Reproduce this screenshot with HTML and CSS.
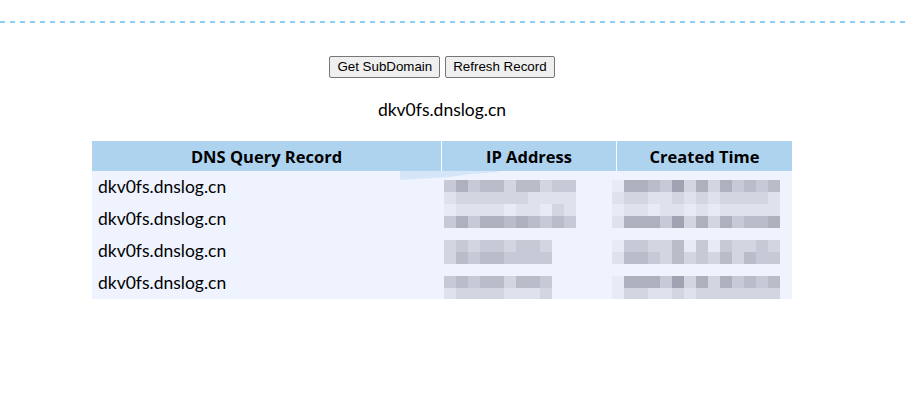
FILE: index.html
```html
<!DOCTYPE html>
<html>
<head>
<meta charset="utf-8">
<title>DNSLog</title>
<link rel="stylesheet" href="styles.css">
</head>
<body>
<div class="topline"></div>
<main class="page">
  <div class="actions">
    <button class="btn">Get SubDomain</button>
    <button class="btn">Refresh Record</button>
  </div>
  <p class="domain">dkv0fs.dnslog.cn</p>
  <div class="table-wrap">
    <table class="records">
      <thead>
        <tr>
          <th class="c-query">DNS Query Record</th>
          <th class="c-ip">IP Address</th>
          <th class="c-time">Created Time</th>
        </tr>
      </thead>
      <tbody>
        <tr>
          <td>dkv0fs.dnslog.cn</td>
          <td><div class="box"><div class="mz ip r1">
            <div class="mr"><i class="d"></i><i class="f"></i><i class="d"></i><i class="e"></i><i class="e"></i><i class="c"></i><i class="e"></i><i class="e"></i><i class="c"></i><i class="d"></i><i class="d"></i></div>
            <div class="mr"><i class="b"></i><i class="c"></i><i class="c"></i><i class="c"></i><i class="c"></i><i class="c"></i><i class="c"></i><i class="b"></i><i class="b"></i><i class="b"></i><i class="b"></i></div>
          </div></div></td>
          <td><div class="box"><div class="mz tm r1">
            <div class="mr"><i class="a"></i><i class="f"></i><i class="f"></i><i class="e"></i><i class="d"></i><i class="g"></i><i class="c"></i><i class="f"></i><i class="c"></i><i class="f"></i><i class="d"></i><i class="e"></i><i class="d"></i><i class="e"></i></div>
            <div class="mr"><i class="b"></i><i class="c"></i><i class="c"></i><i class="b"></i><i class="b"></i><i class="c"></i><i class="b"></i><i class="c"></i><i class="b"></i><i class="c"></i><i class="c"></i><i class="c"></i><i class="c"></i><i class="b"></i></div>
          </div></div></td>
        </tr>
        <tr>
          <td>dkv0fs.dnslog.cn</td>
          <td><div class="box"><div class="mz ip r2">
            <div class="mr"><i class="a"></i><i class="b"></i><i class="b"></i><i class="b"></i><i class="b"></i><i class="a"></i><i class="b"></i><i class="b"></i><i class="a"></i><i class="c"></i><i class="b"></i></div>
            <div class="mr"><i class="d"></i><i class="f"></i><i class="d"></i><i class="f"></i><i class="f"></i><i class="e"></i><i class="f"></i><i class="e"></i><i class="d"></i><i class="e"></i><i class="d"></i></div>
          </div></div></td>
          <td><div class="box"><div class="mz tm r2">
            <div class="mr"><i class="a"></i><i class="b"></i><i class="b"></i><i class="a"></i><i class="b"></i><i class="b"></i><i class="a"></i><i class="b"></i><i class="a"></i><i class="b"></i><i class="b"></i><i class="b"></i><i class="b"></i><i class="b"></i></div>
            <div class="mr"><i class="b"></i><i class="f"></i><i class="f"></i><i class="f"></i><i class="d"></i><i class="g"></i><i class="c"></i><i class="f"></i><i class="c"></i><i class="f"></i><i class="d"></i><i class="e"></i><i class="e"></i><i class="f"></i></div>
          </div></div></td>
        </tr>
        <tr>
          <td>dkv0fs.dnslog.cn</td>
          <td><div class="box"><div class="mz ip r3">
            <div class="mr"><i class="c"></i><i class="d"></i><i class="c"></i><i class="d"></i><i class="d"></i><i class="c"></i><i class="d"></i><i class="d"></i><i class="c"></i></div>
            <div class="mr"><i class="c"></i><i class="e"></i><i class="d"></i><i class="e"></i><i class="e"></i><i class="d"></i><i class="d"></i><i class="d"></i><i class="d"></i></div>
          </div></div></td>
          <td><div class="box"><div class="mz tm r3">
            <div class="mr"><i class="a"></i><i class="d"></i><i class="d"></i><i class="c"></i><i class="c"></i><i class="e"></i><i class="a"></i><i class="d"></i><i class="a"></i><i class="d"></i><i class="c"></i><i class="c"></i><i class="d"></i><i class="c"></i></div>
            <div class="mr"><i class="b"></i><i class="e"></i><i class="e"></i><i class="d"></i><i class="c"></i><i class="e"></i><i class="c"></i><i class="d"></i><i class="c"></i><i class="e"></i><i class="c"></i><i class="e"></i><i class="d"></i><i class="d"></i></div>
          </div></div></td>
        </tr>
        <tr>
          <td>dkv0fs.dnslog.cn</td>
          <td><div class="box"><div class="mz ip r4">
            <div class="mr"><i class="d"></i><i class="e"></i><i class="d"></i><i class="e"></i><i class="e"></i><i class="c"></i><i class="e"></i><i class="e"></i><i class="d"></i></div>
            <div class="mr"><i class="b"></i><i class="c"></i><i class="c"></i><i class="c"></i><i class="c"></i><i class="b"></i><i class="b"></i><i class="b"></i><i class="c"></i></div>
          </div></div></td>
          <td><div class="box"><div class="mz tm r4">
            <div class="mr"><i class="a"></i><i class="f"></i><i class="f"></i><i class="f"></i><i class="d"></i><i class="g"></i><i class="c"></i><i class="f"></i><i class="c"></i><i class="f"></i><i class="d"></i><i class="e"></i><i class="d"></i><i class="e"></i></div>
            <div class="mr"><i class="a"></i><i class="c"></i><i class="c"></i><i class="b"></i><i class="b"></i><i class="c"></i><i class="b"></i><i class="c"></i><i class="c"></i><i class="c"></i><i class="c"></i><i class="c"></i><i class="c"></i><i class="c"></i></div>
          </div></div></td>
        </tr>
      </tbody>
    </table>
    <svg class="smear" width="100" height="10" viewBox="0 0 100 10"><polygon points="0,0 100,0 96,1 70,3 50,6 0,9" fill="#d5e6f8"/></svg>
  </div>
</main>
</body>
</html>
```
FILE: styles.css
```css
html, body {
  margin: 0;
  padding: 0;
  background: #ffffff;
}

body {
  font-family: "Open Sans", "Liberation Sans", sans-serif;
  color: #000;
}

.topline {
  margin-top: 21px;
  height: 2px;
  background: repeating-linear-gradient(90deg, #87cefa 0 5px, transparent 5px 10px);
}

.page {
  width: 884px;
  display: flex;
  flex-direction: column;
  align-items: center;
}

.actions {
  margin-top: 33px;
  display: flex;
  gap: 5px;
}

.btn {
  font-family: "Liberation Sans", Arial, sans-serif;
  font-size: 13.33px;
  height: 22px;
  padding: 0 7px;
  border: 1px solid #767676;
  border-radius: 2px;
  background: #efefef;
  color: #000;
  line-height: 18px;
}

.domain {
  margin: 0;
  margin-top: 21px;
  height: 22px;
  line-height: 22px;
  font-family: "Lato", "Open Sans", sans-serif;
  font-size: 17.5px;
}

.table-wrap {
  position: relative;
  margin-top: 20px;
}

.records {
  width: 700px;
  table-layout: fixed;
  border-collapse: separate;
  border-spacing: 0;
}

.c-query { width: 349px; }
.c-ip { width: 174px; }
.c-time { width: 175px; }

.records th {
  height: 30px;
  padding: 0;
  background: #aed3ef;
  font-family: "Open Sans", sans-serif;
  font-weight: 700;
  font-size: 16.5px;
  text-align: center;
  vertical-align: middle;
}

.records th + th {
  border-left: 1px solid #ffffff;
}

.records td {
  height: 32px;
  padding: 0;
  background: #eef3fe;
  vertical-align: top;
  font-family: "Lato", "Open Sans", sans-serif;
  font-size: 17.5px;
  line-height: 32px;
}

.records td:first-child {
  padding-left: 6px;
}

.box {
  height: 32px;
  overflow: visible;
}

.mz.ip { margin-left: 3px; }
.mz.tm { margin-left: -4px; }
.mz.r1 { padding-top: 9px; }
.mz.r2 { padding-top: 1px; }
.mz.r3 { padding-top: 5px; }
.mz.r4 { padding-top: 9px; }

.mr {
  display: flex;
  height: 12px;
}

.mr i {
  display: block;
  width: 12px;
  height: 12px;
  flex: none;
}

.mr i.a { background: #e8ebf6; }
.mr i.b { background: #dfe1ec; }
.mr i.c { background: #d3d5e1; }
.mr i.d { background: #c7cad6; }
.mr i.e { background: #babdc9; }
.mr i.f { background: #adb0bd; }
.mr i.g { background: #a0a3b1; }

.smear {
  position: absolute;
  left: 308px;
  top: 30px;
}
```
